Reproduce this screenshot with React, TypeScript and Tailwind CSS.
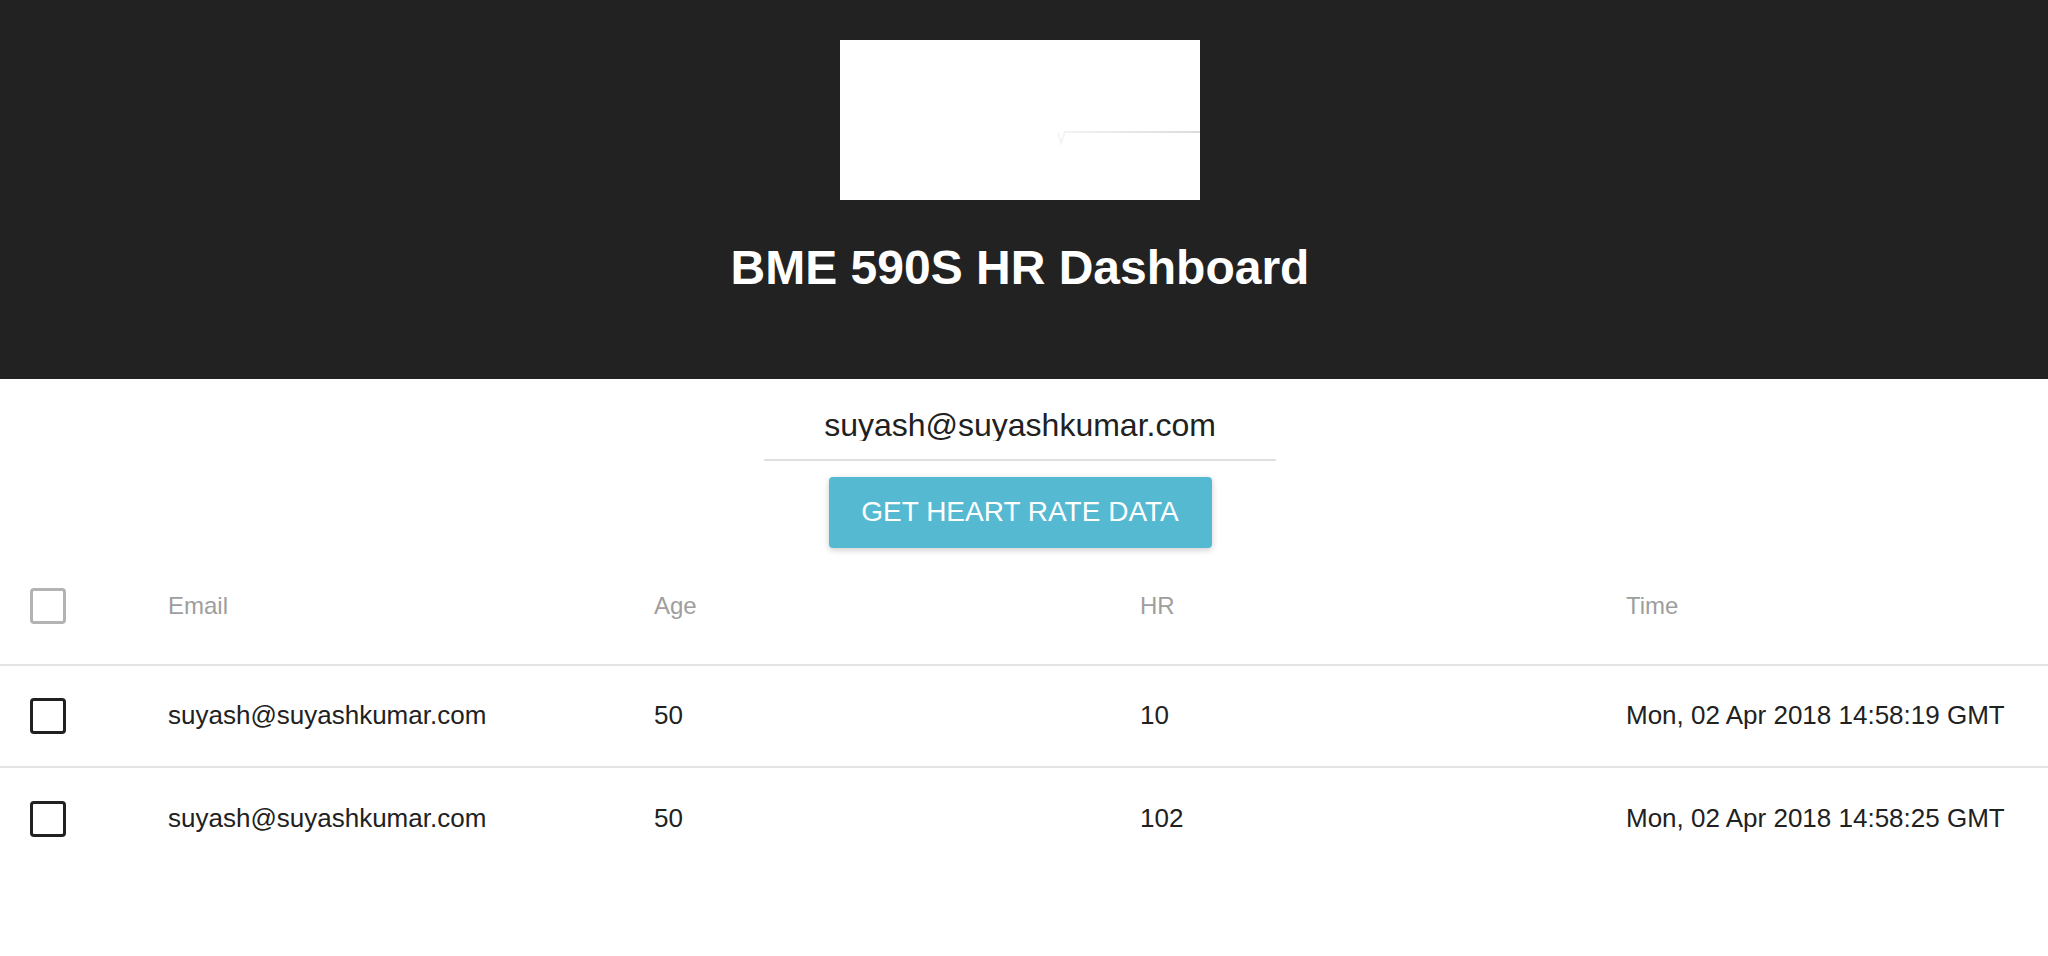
import { useState } from "react";

const rows = [
    { id: 1, email: "suyash@suyashkumar.com", age: 50, hr: 10, time: "Mon, 02 Apr 2018 14:58:19 GMT" },
    { id: 2, email: "suyash@suyashkumar.com", age: 50, hr: 102, time: "Mon, 02 Apr 2018 14:58:25 GMT" },
];

function Box({ header }: { header?: boolean }) {
    return (
        <div className={header
            ? "w-[36px] h-[36px] rounded-[4px] border-[3px] border-[#b3b3b3]"
            : "w-[36px] h-[36px] rounded-[4px] border-[3px] border-[#212121]"} />
    );
}

export default function App() {

    const [email, setEmail] = useState("suyash@suyashkumar.com");

    return (
        <div className="min-h-[956px] bg-white font-['Liberation_Sans',Arial,sans-serif]">
            {/* header */}
            <div className="h-[379px] bg-[#222222] flex flex-col items-center pt-[40px] pr-2">
                <div className="w-[360px] h-[160px] bg-white">
                    <svg width="360" height="160" viewBox="0 0 360 160">
                        <defs>
                            <linearGradient id="fade" x1="0" x2="1" y1="0" y2="0">
                                <stop offset="0" stopColor="#f4f4f4" />
                                <stop offset="1" stopColor="#dcdcdc" />
                            </linearGradient>
                        </defs>
                        <polyline
                            points="218,93 221,103 225,92 360,92"
                            fill="none"
                            stroke="url(#fade)"
                            strokeWidth="2" />
                    </svg>
                </div>
                <h1 className="mt-[44px] text-[48px] leading-none font-bold text-white">BME 590S HR Dashboard</h1>
            </div>

            {/* query form */}
            <div className="flex flex-col items-center pt-[30px] pr-2">
                <div className="w-[512px] border-b-2 border-[#e0e0e0] pb-[16px]">
                    <input
                        value={email}
                        onChange={(e) => setEmail(e.target.value)}
                        className="w-full text-center text-[32px] leading-none h-[32px] text-[#212121] outline-none bg-transparent"
                    />
                </div>
                <button className="mt-[16px] w-[383px] h-[71px] rounded-[4px] bg-[#54b9d1] text-white text-[28px] leading-none uppercase shadow-[0_2px_6px_rgba(0,0,0,0.2)]">
                    Get Heart Rate Data
                </button>
            </div>

            {/* table */}
            <div className="grid grid-cols-[104px_repeat(4,486px)] h-[118px] items-center border-b-2 border-[#e4e4e4] text-[24px] text-[#9e9e9e]">
                <div className="pl-[30px]"><Box header /></div>
                <div className="pl-[64px]">Email</div>
                <div className="pl-[64px]">Age</div>
                <div className="pl-[64px]">HR</div>
                <div className="pl-[64px]">Time</div>
            </div>
            {rows.map((r, i) => (
                <div
                    key={r.id}
                    className={i < rows.length - 1
                        ? "grid grid-cols-[104px_repeat(4,486px)] h-[102px] items-center border-b-2 border-[#e4e4e4] text-[26px] text-[#212121]"
                        : "grid grid-cols-[104px_repeat(4,486px)] h-[102px] items-center text-[26px] text-[#212121]"}>
                    <div className="pl-[30px]"><Box /></div>
                    <div className="pl-[64px]">{r.email}</div>
                    <div className="pl-[64px]">{r.age}</div>
                    <div className="pl-[64px]">{r.hr}</div>
                    <div className="pl-[64px] whitespace-nowrap">{r.time}</div>
                </div>
            ))}
        </div>
    );
}
